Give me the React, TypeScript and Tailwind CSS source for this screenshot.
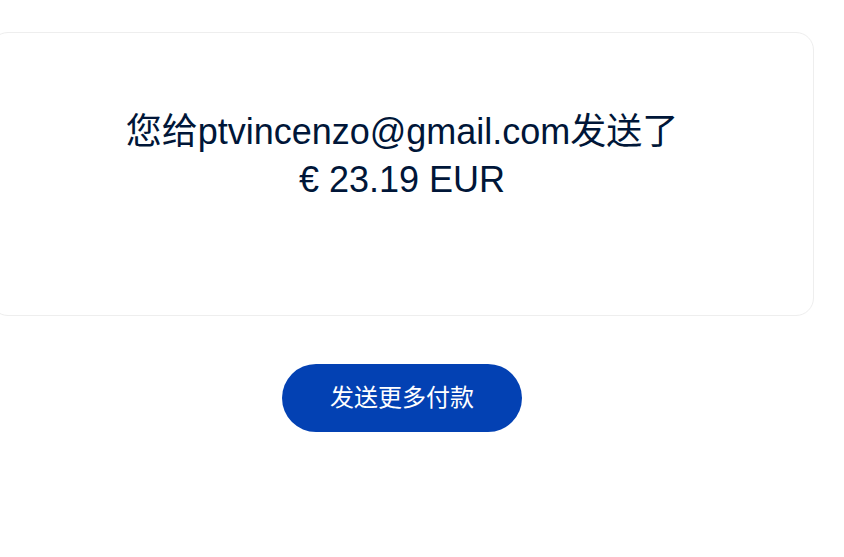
export default function App() {
  return (
    <div
      className="min-h-[557px] w-[844px] overflow-hidden bg-white"
      style={{ fontFamily: '"Liberation Sans", Arial, "Noto Sans CJK SC", sans-serif' }}
    >
      <div className="ml-[-10px] w-[824px] pt-8">
        <div className="rounded-[18px] border border-[#eeeeee] bg-white pt-[75px] pb-[111px] text-center text-[36px] leading-[48px] text-[#001638]">
          <p>您给ptvincenzo@gmail.com发送了</p>
          <p>€ 23.19 EUR</p>
        </div>
        <div className="mt-[48px] flex justify-center">
          <button className="h-[68px] w-[240px] rounded-full bg-[#0341b3] text-[24px] text-white">
            发送更多付款
          </button>
        </div>
      </div>
    </div>
  );
}
